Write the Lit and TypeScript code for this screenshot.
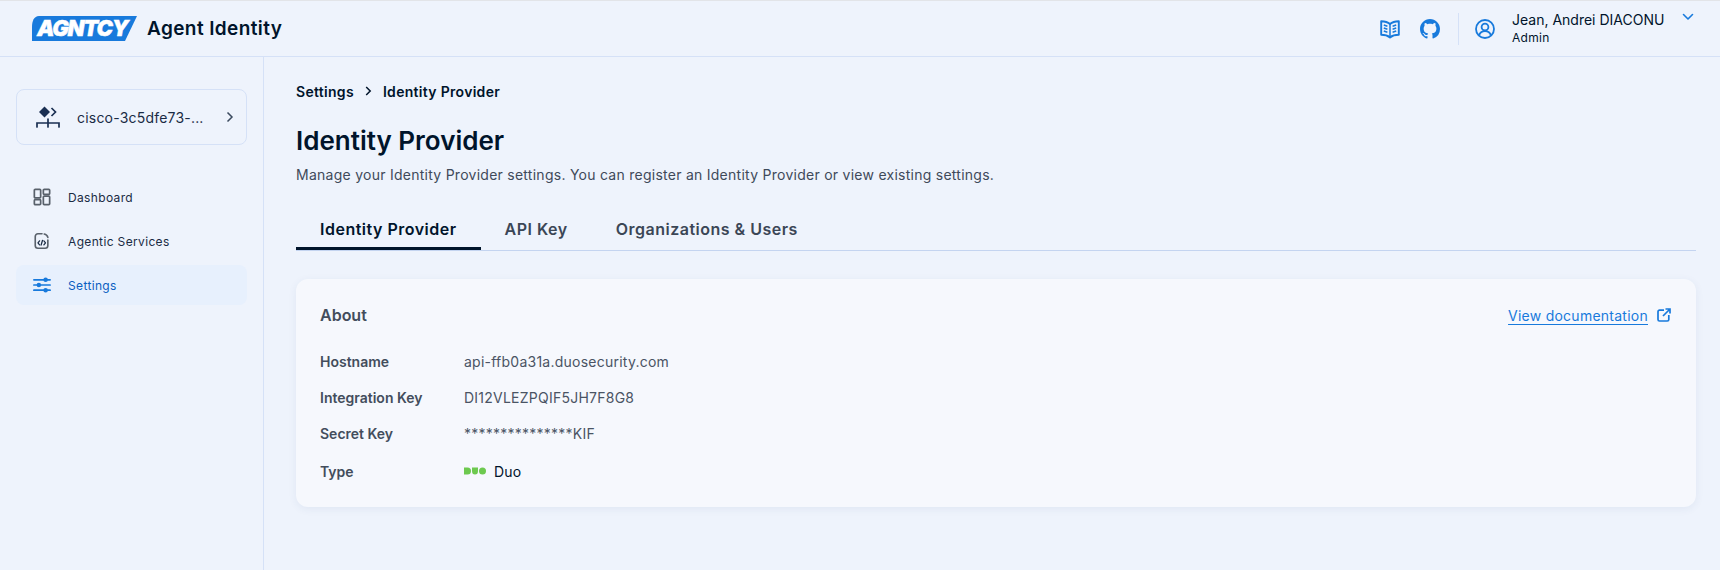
import { LitElement, html, css, svg } from "lit";
import { customElement, state } from "lit/decorators.js";

const icons = {
  book: svg`<path d="M10 5C8 3.200 4.800 2.200 1.200 2.200v13.600c3.600 0 6.800 1 8.800 2.600 2-1.600 5.200-2.600 8.800-2.600V2.200C15.200 2.200 12 3.200 10 5Z" fill="none" stroke="currentColor" stroke-width="1.900" stroke-linejoin="round"/><path d="M10 5v13M3.800 6l3.600 1.200M3.800 9l3.600 1.200M3.800 12l3.600 1.200M12.600 7.200 16.200 6M12.600 10.200 16.200 9M12.600 13.200l3.600-1.200" stroke="currentColor" stroke-width="1.500" fill="none"/>`,
  github: svg`<path fill="currentColor" d="M8 0C3.580 0 0 3.580 0 8c0 3.540 2.290 6.530 5.470 7.590.4.070.55-.17.55-.38 0-.19-.01-.82-.01-1.490-2.010.37-2.530-.49-2.690-.94-.09-.23-.48-.94-.82-1.130-.28-.15-.68-.52-.01-.53.63-.01 1.080.58 1.230.82.72 1.210 1.870.87 2.330.66.07-.52.28-.87.51-1.070-1.780-.2-3.640-.89-3.640-3.950 0-.87.31-1.590.82-2.150-.08-.2-.36-1.020.08-2.120 0 0 .67-.21 2.200.82.64-.18 1.320-.27 2-.27s1.360.09 2 .27c1.530-1.040 2.200-.82 2.200-.82.44 1.100.16 1.920.08 2.120.51.56.82 1.270.82 2.150 0 3.070-1.870 3.750-3.650 3.950.29.25.54.73.54 1.480 0 1.070-.01 1.930-.01 2.200 0 .21.15.46.55.38A8.010 8.010 0 0 0 16 8c0-4.420-3.580-8-8-8Z"/>`,
  user: svg`<circle cx="10" cy="10" r="9" fill="none" stroke="currentColor" stroke-width="1.800"/><circle cx="10" cy="8" r="3.400" fill="none" stroke="currentColor" stroke-width="1.800"/><path d="M4.200 16.400c.6-2.600 2.800-4.200 5.800-4.200s5.200 1.600 5.800 4.200" fill="none" stroke="currentColor" stroke-width="1.800"/>`,
  dashboard: svg`<g fill="none" stroke="currentColor" stroke-width="1.900"><rect x="1.500" y="1.500" width="7" height="9.500" rx="1"/><rect x="11.500" y="1.500" width="7" height="5.500" rx="1"/><rect x="1.500" y="13" width="7" height="5.500" rx="1"/><rect x="11.500" y="9" width="7" height="9.500" rx="1"/></g>`,
  services: svg`<path d="M10 2H5.500A3 3 0 0 0 2.500 5v10a3 3 0 0 0 3 3h8a3 3 0 0 0 3-3V9" fill="none" stroke="currentColor" stroke-width="1.800" stroke-linecap="round"/><path d="M12.500 2.200c1.800.4 3.600 2 4 3.800" fill="none" stroke="currentColor" stroke-width="1.800" stroke-linecap="round"/><path d="M7.300 9.800 5.500 12l1.800 2.200M12.100 9.800l1.800 2.200-1.800 2.200M10.500 9.400 9 14.600" fill="none" stroke="#1a2b44" stroke-width="1.400" stroke-linecap="round" stroke-linejoin="round"/>`,
  settings: svg`<path d="M1 4.200h18M1 10h18M1 15.800h18" stroke="currentColor" stroke-width="1.900" stroke-linecap="round"/><circle cx="14" cy="4.200" r="2.500" fill="currentColor"/><circle cx="6.500" cy="10" r="2.500" fill="currentColor"/><circle cx="14" cy="15.800" r="2.500" fill="currentColor"/>`,
};

const navItems = [
  { label: "Dashboard", icon: icons.dashboard },
  { label: "Agentic Services", icon: icons.services },
  { label: "Settings", icon: icons.settings, active: true },
];

const tabs = ["Identity Provider", "API Key", "Organizations & Users"];

@customElement("app-root")
export class AppRoot extends LitElement {
  @state()
  activeTab = 0;

  static styles = css`
    :host {
      display: block;
      height: 570px;
      overflow: hidden;
      background: #eef3fc;
      color: #00142b;
      font-family: Inter, "Liberation Sans", sans-serif;
      border-top: 1px solid #e2e4e8;
      box-sizing: border-box;
    }
    svg {
      display: block;
      flex: none;
    }
    .header {
      height: 55px;
      display: flex;
      align-items: center;
      padding: 0 26px 0 32px;
      border-bottom: 1px solid #d5e1f7;
    }
    .logo {
      position: relative;
      width: 105px;
      height: 25px;
      flex: none;
    }
    .logo-text {
      position: absolute;
      left: 5px;
      top: 0;
      width: 90px;
      text-align: center;
      font: italic 900 22px/25px Inter, sans-serif;
      letter-spacing: -1.200px;
      -webkit-text-stroke: 0.4px #fff;
      color: #fff;
    }
    .app-name {
      margin-left: 10px;
      font-size: 19px;
      font-weight: 600;
      letter-spacing: 0.4px;
      color: #00142b;
    }
    .actions {
      margin-left: auto;
      display: flex;
      align-items: center;
      color: #187adc;
    }
    .book {
      width: 20px;
      height: 20px;
    }
    .github {
      width: 20px;
      height: 20px;
      margin-left: 20px;
    }
    .divider {
      width: 1px;
      height: 32px;
      margin: 0 16px 0 18px;
      background: #d5e1f7;
    }
    .avatar {
      width: 20px;
      height: 20px;
      margin-right: 17px;
    }
    .who {
      width: 170px;
      padding-bottom: 2px;
      color: #00142b;
    }
    .who-name {
      font-size: 14px;
      line-height: 20px;
    }
    .who-role {
      font-size: 12px;
      line-height: 15px;
      letter-spacing: 0.3px;
    }
    .caret {
      align-self: flex-start;
      margin-top: 3px;
      width: 12px;
      height: 8px;
    }
    .body {
      display: flex;
      height: 513px;
    }
    .sidebar {
      width: 264px;
      flex: none;
      padding: 32px 16px 0;
      box-sizing: border-box;
      border-right: 1px solid #d5e1f7;
    }
    .org {
      height: 56px;
      width: 231px;
      box-sizing: border-box;
      display: flex;
      align-items: center;
      padding: 0 12px 0 19px;
      border: 1px solid #d5e1f7;
      border-radius: 8px;
      margin-bottom: 32px;
    }
    .org-icon {
      width: 24px;
      height: 24px;
      color: #1a2f52;
    }
    .org-name {
      margin-left: 17px;
      flex: 1;
      font-size: 14px;
      letter-spacing: 0.2px;
      color: #1a2b44;
    }
    .org-chev {
      width: 8px;
      height: 12px;
      color: #3b4a5e;
    }
    .nav {
      display: flex;
      flex-direction: column;
      gap: 4px;
    }
    .nav-item {
      height: 40px;
      display: flex;
      align-items: center;
      gap: 17px;
      padding: 0 17px;
      width: 231px;
      box-sizing: border-box;
      border-radius: 8px;
      font-size: 12px;
      letter-spacing: 0.35px;
      color: #1a2b44;
    }
    .nav-item svg {
      width: 18px;
      height: 18px;
      color: #59616b;
    }
    .nav-item.active {
      background: #e7f0fd;
      color: #0b5fc1;
    }
    .nav-item.active svg {
      color: #187adc;
    }
    .main {
      flex: 1;
      padding: 24px 24px 0 32px;
      min-width: 0;
    }
    .crumbs {
      display: flex;
      align-items: center;
      height: 20px;
      font-size: 14px;
      font-weight: 600;
      letter-spacing: 0.3px;
      color: #00142b;
    }
    .crumbs svg {
      width: 7px;
      height: 10px;
      margin: 0 11px;
    }
    h1 {
      margin: 24px 0 0;
      font-size: 26px;
      line-height: 32px;
      font-weight: 600;
      color: #00142b;
    }
    .sub {
      margin: 8px 0 0;
      font-size: 14px;
      line-height: 20px;
      letter-spacing: 0.26px;
      color: #3f4a5a;
    }
    .tabs {
      display: flex;
      margin-top: 22px;
      border-bottom: 1px solid #c4d4f0;
    }
    .tab {
      padding: 4px 24px 0;
      height: 43px;
      display: flex;
      align-items: center;
      box-sizing: border-box;
      font-size: 16px;
      font-weight: 600;
      letter-spacing: 0.5px;
      color: #3b4656;
      border-bottom: 3px solid transparent;
    }
    .tab.active {
      color: #00142b;
      border-bottom-color: #00142b;
    }
    .card {
      margin-top: 28px;
      height: 228px;
      box-sizing: border-box;
      padding: 24px;
      background: #f6f8fd;
      border-radius: 12px;
      box-shadow: 0 2px 8px rgba(40, 70, 130, 0.07);
    }
    .card-head {
      display: flex;
      align-items: center;
      justify-content: space-between;
      height: 24px;
    }
    .card-title {
      font-size: 16px;
      font-weight: 600;
      color: #434d5c;
    }
    .doc-link {
      display: flex;
      align-items: center;
      gap: 9px;
      padding-right: 1px;
      font-size: 14px;
      color: #187adc;
      letter-spacing: 0.25px;
    }
    .doc-link span {
      text-decoration: underline;
      text-underline-offset: 3px;
    }
    .doc-link svg {
      width: 14px;
      height: 14px;
    }
    .rows {
      margin-top: 24px;
      display: grid;
      grid-template-columns: 144px 1fr;
      grid-template-rows: 20px 20px 20px 24px;
      row-gap: 16px;
      align-items: center;
      font-size: 14px;
    }
    .label {
      font-weight: 600;
      color: #434d5c;
    }
    .value {
      color: #4a5464;
      letter-spacing: 0.24px;
      display: flex;
      align-items: center;
    }
    .value.type {
      color: #00142b;
      gap: 8px;
    }
    .duo {
      width: 22px;
      height: 8px;
    }
  `;

  renderHeader() {
    return html`<div class="header">
      <div class="logo">
        <svg width="105" height="25" viewBox="0 0 105 25">
          <path d="M7 0H105L93 25H0V11C0 5 2 0 7 0Z" fill="#187adc" />
        </svg>
        <div class="logo-text">AGNTCY</div>
      </div>
      <div class="app-name">Agent Identity</div>
      <div class="actions">
        <svg class="book" viewBox="0 0 20 20">${icons.book}</svg>
        <svg class="github" viewBox="0 0 16 16">${icons.github}</svg>
        <div class="divider"></div>
        <svg class="avatar" viewBox="0 0 20 20">${icons.user}</svg>
        <div class="who">
          <div class="who-name">Jean, Andrei DIACONU</div>
          <div class="who-role">Admin</div>
        </div>
        <svg class="caret" viewBox="0 0 12 8">
          <path d="M1.500 1.500 6 6l4.500-4.500" fill="none" stroke="currentColor" stroke-width="1.600" stroke-linecap="round" stroke-linejoin="round" />
        </svg>
      </div>
    </div>`;
  }

  renderSidebar() {
    return html`<div class="sidebar">
      <div class="org">
        <svg class="org-icon" viewBox="0 0 24 24">
          <path d="M8.500 1.500 14 7l-5.500 5.500L3 7Z" fill="currentColor" />
          <path d="m15.500 3 4 4-4 4" fill="none" stroke="currentColor" stroke-width="1.700" />
          <path d="M1 22v-4h22v4M12 14v8" fill="none" stroke="currentColor" stroke-width="1.700" stroke-linecap="round" />
        </svg>
        <div class="org-name">cisco-3c5dfe73-...</div>
        <svg class="org-chev" viewBox="0 0 8 12">
          <path d="m1.500 1.500 4.500 4.500-4.500 4.500" fill="none" stroke="currentColor" stroke-width="1.500" />
        </svg>
      </div>
      <div class="nav">
        ${navItems.map(
          (item) => html`<div class="nav-item ${item.active ? "active" : ""}">
            <svg viewBox="0 0 20 20">${item.icon}</svg>
            <span>${item.label}</span>
          </div>`
        )}
      </div>
    </div>`;
  }

  renderCard() {
    return html`<div class="card">
      <div class="card-head">
        <div class="card-title">About</div>
        <div class="doc-link">
          <span>View documentation</span>
          <svg viewBox="0 0 14 14">
            <path d="M7 2.200H2.500A1.500 1.500 0 0 0 1 3.700v7.800A1.500 1.500 0 0 0 2.500 13h7.800a1.500 1.500 0 0 0 1.500-1.500V7" fill="none" stroke="currentColor" stroke-width="1.700" />
            <path d="M6 8 13 1M8.500 1H13v4.500" fill="none" stroke="currentColor" stroke-width="1.700" />
          </svg>
        </div>
      </div>
      <div class="rows">
        <div class="label">Hostname</div>
        <div class="value">api-ffb0a31a.duosecurity.com</div>
        <div class="label">Integration Key</div>
        <div class="value">DI12VLEZPQIF5JH7F8G8</div>
        <div class="label">Secret Key</div>
        <div class="value">***************KIF</div>
        <div class="label">Type</div>
        <div class="value type">
          <svg class="duo" viewBox="0 0 22 8">
            <path d="M0 .5h3.500a3.500 3.500 0 0 1 0 7H0Z" fill="#6dc94f" />
            <path d="M8 .5h6V4a3 3.500 0 0 1-6 0Z" fill="#6dc94f" />
            <circle cx="18.500" cy="4" r="3.500" fill="#6dc94f" />
          </svg>
          Duo
        </div>
      </div>
    </div>`;
  }

  render() {
    return html`${this.renderHeader()}
      <div class="body">
        ${this.renderSidebar()}
        <div class="main">
          <div class="crumbs">
            Settings
            <svg viewBox="0 0 7 10">
              <path d="m1.200 1 4 4-4 4" fill="none" stroke="currentColor" stroke-width="1.500" />
            </svg>
            Identity Provider
          </div>
          <h1>Identity Provider</h1>
          <p class="sub">Manage your Identity Provider settings. You can register an Identity Provider or view existing settings.</p>
          <div class="tabs">
            ${tabs.map(
              (t, i) => html`<div class="tab ${i === this.activeTab ? "active" : ""}">${t}</div>`
            )}
          </div>
          ${this.renderCard()}
        </div>
      </div>`;
  }
}
